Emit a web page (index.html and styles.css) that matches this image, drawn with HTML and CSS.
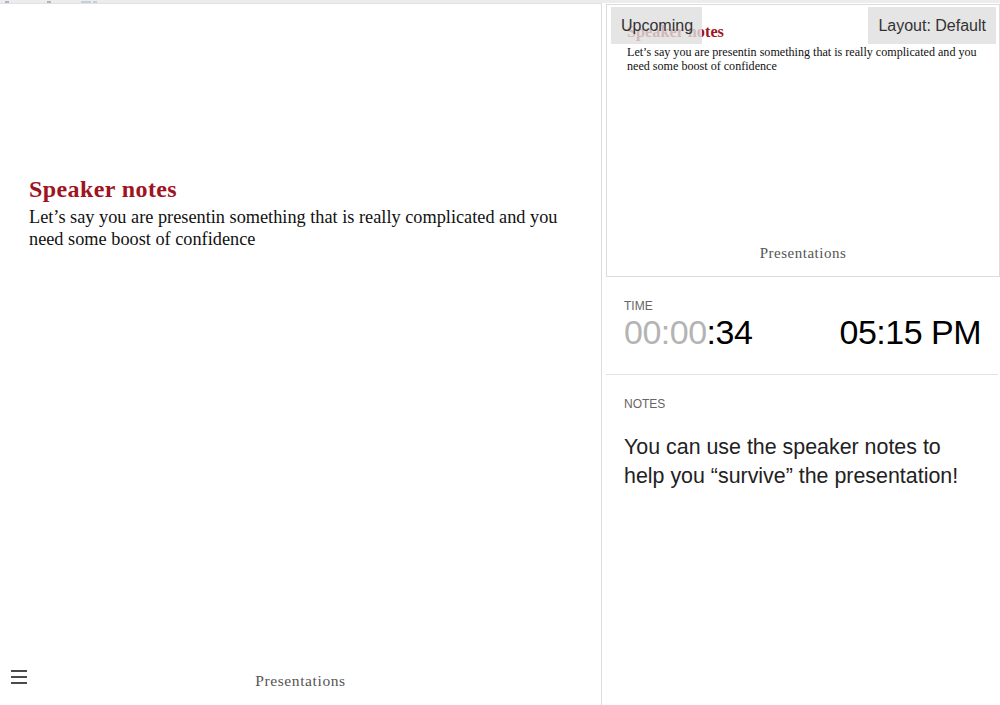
FILE: index.html
```html
<!DOCTYPE html>
<html>
<head>
<meta charset="utf-8">
<link rel="stylesheet" href="styles.css">
</head>
<body>
<div class="topstrip">
  <span class="frag f1"></span><span class="frag f2"></span><span class="frag f3"></span><span class="frag f4"></span>
</div>
<div class="main">
  <div class="current">
    <div class="slide">
      <h2 class="title">Speaker notes</h2>
      <p class="body">Let’s say you are presentin something that is really complicated and you need some boost of confidence</p>
    </div>
    <div class="footer">
      <span class="menu"><i></i><i></i><i></i></span>
      <span class="brand">Presentations</span>
    </div>
  </div>
  <div class="side">
    <div class="upcoming">
      <div class="mini">
        <h3 class="mini-title">Speaker notes</h3>
        <p class="mini-body">Let’s say you are presentin something that is really complicated and you need some boost of confidence</p>
      </div>
      <div class="mini-footer">Presentations</div>
      <span class="btn btn-up">Upcoming</span>
      <span class="btn btn-layout">Layout: Default</span>
    </div>
    <div class="time">
      <div class="label">TIME</div>
      <div class="clocks">
        <span class="timer"><span class="dim">00:00</span>:34</span>
        <span class="clock">05:15 PM</span>
      </div>
    </div>
    <div class="notes">
      <div class="label">NOTES</div>
      <p class="notes-text">You can use the speaker notes to help you “survive” the presentation!</p>
    </div>
  </div>
</div>
</body>
</html>
```

FILE: styles.css
```css
* { box-sizing: border-box; }
html, body { margin: 0; padding: 0; background: #fff; }
body { width: 1000px; height: 705px; overflow: hidden; font-family: "Liberation Sans", Arial, sans-serif; }

.topstrip {
  height: 3px;
  background: #ececec;
  display: flex;
  align-items: flex-start;
}
.frag { display: block; height: 2px; background: #a8b8c8; margin-top: 1px; }
.f1 { width: 4px; margin-left: 5px; }
.f2 { width: 4px; margin-left: 38px; }
.f3 { width: 10px; margin-left: 30px; background: #c3cfd9; }
.f4 { width: 4px; margin-left: 2px; background: #c3cfd9; }

.main { display: flex; height: 702px; }

.current {
  width: 602px;
  border-right: 1px solid #dcdcdc;
  border-top: 1px solid #e2e2e2;
  display: flex;
  flex-direction: column;
}
.slide { flex: 1; padding: 171px 20px 0 29px; font-family: "Liberation Serif", "Times New Roman", serif; }
.title { margin: 0; font-size: 24px; line-height: 28px; color: #9e1421; font-weight: bold; letter-spacing: 0.4px; }
.body { margin: 3px 0 0; font-size: 18.3px; line-height: 22px; color: #111; max-width: 545px; }

.footer { height: 46px; position: relative; display: flex; align-items: center; justify-content: center; }
.menu { position: absolute; left: 11px; top: 11px; width: 16px; display: flex; flex-direction: column; gap: 4px; }
.menu i { display: block; height: 2px; background: #4a4a4a; }
.brand { font-family: "Liberation Serif", serif; font-size: 15.5px; color: #555; letter-spacing: 0.6px; margin-top: -3px; }

.side { flex: 1; display: flex; flex-direction: column; }

.upcoming {
  position: relative;
  margin: 1px 0 0 4px;
  width: 394px;
  height: 273px;
  border: 1px solid #dcdcdc;
  display: flex;
  flex-direction: column;
  font-family: "Liberation Serif", serif;
}
.mini { flex: 1; padding: 18px 20px 0 20px; }
.mini-title { margin: 0; font-size: 16.3px; line-height: 18px; color: #9e1421; font-weight: bold; }
.mini-body { margin: 4px 0 0; font-size: 12.1px; line-height: 14px; color: #111; max-width: 352px; }
.mini-footer { height: 31px; text-align: center; font-size: 15px; color: #555; letter-spacing: 0.5px; }

.btn {
  position: absolute;
  top: 2px;
  height: 37px;
  background: rgba(222,222,222,0.8);
  color: #333;
  font-family: "Liberation Sans", Arial, sans-serif;
  font-size: 16px;
  line-height: 37px;
  padding: 0 10px;
  white-space: nowrap;
}
.btn-up { left: 4px; width: 91px; }
.btn-layout { right: 3px; text-align: center; padding: 0 10px; }

.time { padding: 22px 18px 0 18px; height: 98px; border-bottom: 1px solid #e2e2e2; margin-left: 4px; margin-right: 2px; }
.label { font-size: 12px; color: #666; line-height: 14px; }
.clocks { display: flex; justify-content: space-between; align-items: baseline; margin-top: -1px; }
.timer, .clock { font-size: 34px; line-height: 40px; color: #000; letter-spacing: -0.5px; }
.dim { color: #b4b4b4; }
.clock { margin-right: -1px; }

.notes { padding: 22px 30px 0 22px; }
.notes-text { margin: 22px 0 0; font-size: 21.4px; line-height: 29px; color: #222; }
```
